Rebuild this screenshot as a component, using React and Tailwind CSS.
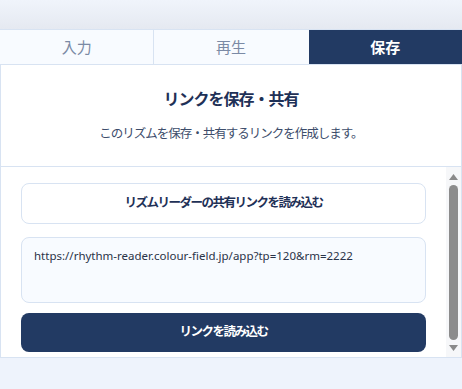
const tabs = ['入力', '再生', '保存']

function Scrollbar() {
  return (
    <div className="flex w-[15px] shrink-0 flex-col items-center bg-[#f6f7f9] py-[4px]">
      <svg width="9" height="6" viewBox="0 0 9 6" className="mt-[3px]">
        <path d="M4.5 0 L9 6 L0 6 Z" fill="#8a8a8a" />
      </svg>
      <div className="mt-[5px] w-[9px] flex-1 rounded-full bg-[#8c8c8c]" />
      <svg width="9" height="6" viewBox="0 0 9 6" className="mt-[5px] mb-[2px]">
        <path d="M0 0 L9 0 L4.5 6 Z" fill="#8a8a8a" />
      </svg>
    </div>
  )
}

export default function App() {
  const active = 2
  return (
    <div
      className="flex h-[389px] w-[462px] flex-col bg-[#eef3fc]"
      style={{ fontFamily: '"Noto Sans", "Noto Sans CJK JP", sans-serif' }}
    >
      <div className="h-[29px] shrink-0 bg-gradient-to-b from-[#f0f4fb] to-[#e5e9f1]" />

      <div className="flex h-[36px] shrink-0 border-y border-[#d8e3f2] bg-[#f8fbff]">
        {tabs.map((t, i) => (
          <div
            key={t}
            className={
              i === active
                ? 'ml-[1px] flex flex-1 items-center justify-center bg-[#223a63] text-[15px] font-bold text-white'
                : i === 0
                ? 'flex flex-1 items-center justify-center border-r border-[#d8e3f2] text-[15px] text-[#7b8aa5]'
                : 'flex flex-1 items-center justify-center text-[15px] text-[#7b8aa5]'
            }
          >
            {t}
          </div>
        ))}
      </div>

      <div className="flex h-[293px] shrink-0 flex-col border-x border-b border-[#d8e3f2] bg-white">
        <div className="flex h-[102px] shrink-0 flex-col items-center justify-center gap-[14px] border-b border-[#d8e3f2]">
          <h2 className="text-[16px] font-bold tracking-[-1px] text-[#1f3157]">リンクを保存・共有</h2>
          <p className="text-[12.5px] tracking-[-1px] text-[#3d4d6b]">このリズムを保存・共有するリンクを作成します。</p>
        </div>

        <div className="flex min-h-0 flex-1">
          <div className="flex min-w-0 flex-1 flex-col overflow-hidden px-5 pt-4">
            <button className="flex h-[41px] shrink-0 items-center justify-center rounded-lg border border-[#d8e3f2] bg-white text-[12.5px] font-bold tracking-[-1.5px] text-[#1f3157]">
              リズムリーダーの共有リンクを読み込む
            </button>
            <div className="mt-[13px] h-[66px] shrink-0 rounded-lg border border-[#d8e3f2] bg-[#f8fbff] px-3 pt-[9px] text-[11.5px] text-[#2a3348]">
              https://rhythm-reader.colour-field.jp/app?tp=120&amp;rm=2222
            </div>
            <button className="mt-[10px] flex h-[39px] shrink-0 items-center justify-center rounded-lg bg-[#223a63] text-[12.5px] font-bold tracking-[-1.5px] text-white">
              リンクを読み込む
            </button>
          </div>
          <Scrollbar />
        </div>
      </div>
    </div>
  )
}
